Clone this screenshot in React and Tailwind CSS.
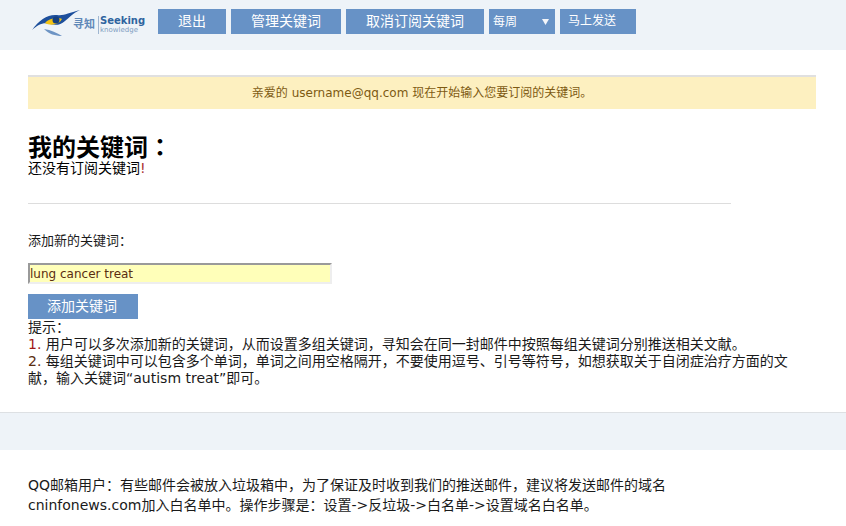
const font = { fontFamily: '"DejaVu Sans", "Noto Sans CJK SC", sans-serif' };

function Logo() {
  return (
    <div className="flex items-center h-[32px]">
      <svg width="50" height="28" viewBox="0 0 50 28" className="shrink-0">
        <path d="M1 21 C8 11 17 5 26 6 C33 7 37 4 49 1 C42 4 38 9 34 12 C29 17 23 16 19 15 C12 13 7 16 1 21Z" fill="#1d4f9c" />
        <path d="M13 20 C20 21 26 24 31 27 C24 27 18 25 13 20Z" fill="#6d94c4" />
        <path d="M14 14 C18 9 27 8 31 10 C28 16 19 17 14 14Z" fill="#f3c316" />
        <circle cx="25" cy="11" r="3.5" fill="#16407f" />
      </svg>
      <div className="flex items-center text-[#5f88b8] mt-[3px]">
        <span className="w-[24px] text-[11px] font-bold leading-none whitespace-nowrap ml-[-8px]">寻知</span>
        <div className="border-l border-[#9fb6d1] pl-[1px] ml-[1px] h-[18px] flex flex-col justify-center">
          <div className="text-[10px] font-bold leading-[10px] text-[#2f649f]">Seeking</div>
          <div className="text-[7px] leading-[8px] text-[#7f9ec2]">knowledge</div>
        </div>
      </div>
    </div>
  );
}

function NavButton({ className, children }) {
  return (
    <button className={`h-[25px] bg-[#6792c6] text-white leading-[25px] ${className}`}>
      {children}
    </button>
  );
}

export default function App() {
  return (
    <div style={font} className="w-[846px] h-[526px] overflow-hidden bg-white text-[14px] text-[#1a1a1a]">
      <div className="h-[50px] bg-[#eef3f8] flex items-start">
        <div className="ml-[31px] pt-[7px] w-[127px]">
          <Logo />
        </div>
        <div className="flex gap-[5px] pt-[9px]">
          <NavButton className="w-[68px] text-[14px] text-center">退出</NavButton>
          <NavButton className="w-[110px] text-[14px] text-center">管理关键词</NavButton>
          <NavButton className="w-[138px] text-[14px] text-center">取消订阅关键词</NavButton>
          <div className="w-[66px] h-[25px] bg-[#6792c6] text-white text-[12px] pl-[4px] pr-[6px] flex items-center justify-between">
            <span>每周</span>
            <svg width="7" height="6" viewBox="0 0 7 6"><path d="M0 0H7L3.5 6Z" fill="#f4f6fa" /></svg>
          </div>
          <NavButton className="w-[76px] text-[12px] text-left pl-[8px]">马上发送</NavButton>
        </div>
      </div>

      <div className="ml-[28px] w-[788px] mt-[25px] h-[34px] border-t-2 border-[#e0e0e0] bg-[#fdf0c0] text-[#7d5a12] text-[12px] leading-[33px] text-center">
        亲爱的 username@qq.com 现在开始输入您要订阅的关键词。
      </div>

      <div className="mx-[28px]">
        <h1 className="mt-[23px] h-[28px] text-[24px] font-bold leading-[28px] text-black">
          我的关键词<span style={{ fontFamily: '"Noto Sans CJK TC", sans-serif' }}>：</span>
        </h1>
        <p className="leading-[16px] text-black">还没有订阅关键词<span className="text-[#a33]">!</span></p>
        <div className="mt-[27px] w-[703px] border-t border-[#dddddd]" />
        <p className="mt-[29px] text-[13px] leading-[16px]">添加新的关键词：</p>
        <input
          readOnly
          value="lung cancer treat"
          style={font}
          className="block mt-[14px] w-[304px] h-[21px] bg-[#ffffb9] border-2 border-t-[#9a9a9a] border-l-[#9a9a9a] border-r-[#eeeeee] border-b-[#eeeeee] px-0 text-[12px] text-[#5a2d10] outline-none"
        />
        <button className="block mt-[10px] w-[110px] h-[25px] bg-[#6792c6] text-white text-[14px] leading-[25px] pr-[2px]">添加关键词</button>
        <div className="w-[770px] leading-[17px]">
          <p>提示：</p>
          <p><span className="text-[#a01818]">1.</span> 用户可以多次添加新的关键词，从而设置多组关键词，寻知会在同一封邮件中按照每组关键词分别推送相关文献。</p>
          <p><span className="text-[#5a2d10]">2.</span> 每组关键词中可以包含多个单词，单词之间用空格隔开，不要使用逗号、引号等符号，如想获取关于自闭症治疗方面的文献，输入关键词“autism treat”即可。</p>
        </div>
      </div>

      <div className="mt-[25px] h-[38px] bg-[#eef3f8] border-t border-[#dde0e3]" />

      <div className="ml-[28px] mt-[25px] w-[660px] text-[14px] leading-[20px]">
        QQ邮箱用户：有些邮件会被放入垃圾箱中，为了保证及时收到我们的推送邮件，建议将发送邮件的域名cninfonews.com加入白名单中。操作步骤是：设置-&gt;反垃圾-&gt;白名单-&gt;设置域名白名单。
      </div>
    </div>
  );
}
